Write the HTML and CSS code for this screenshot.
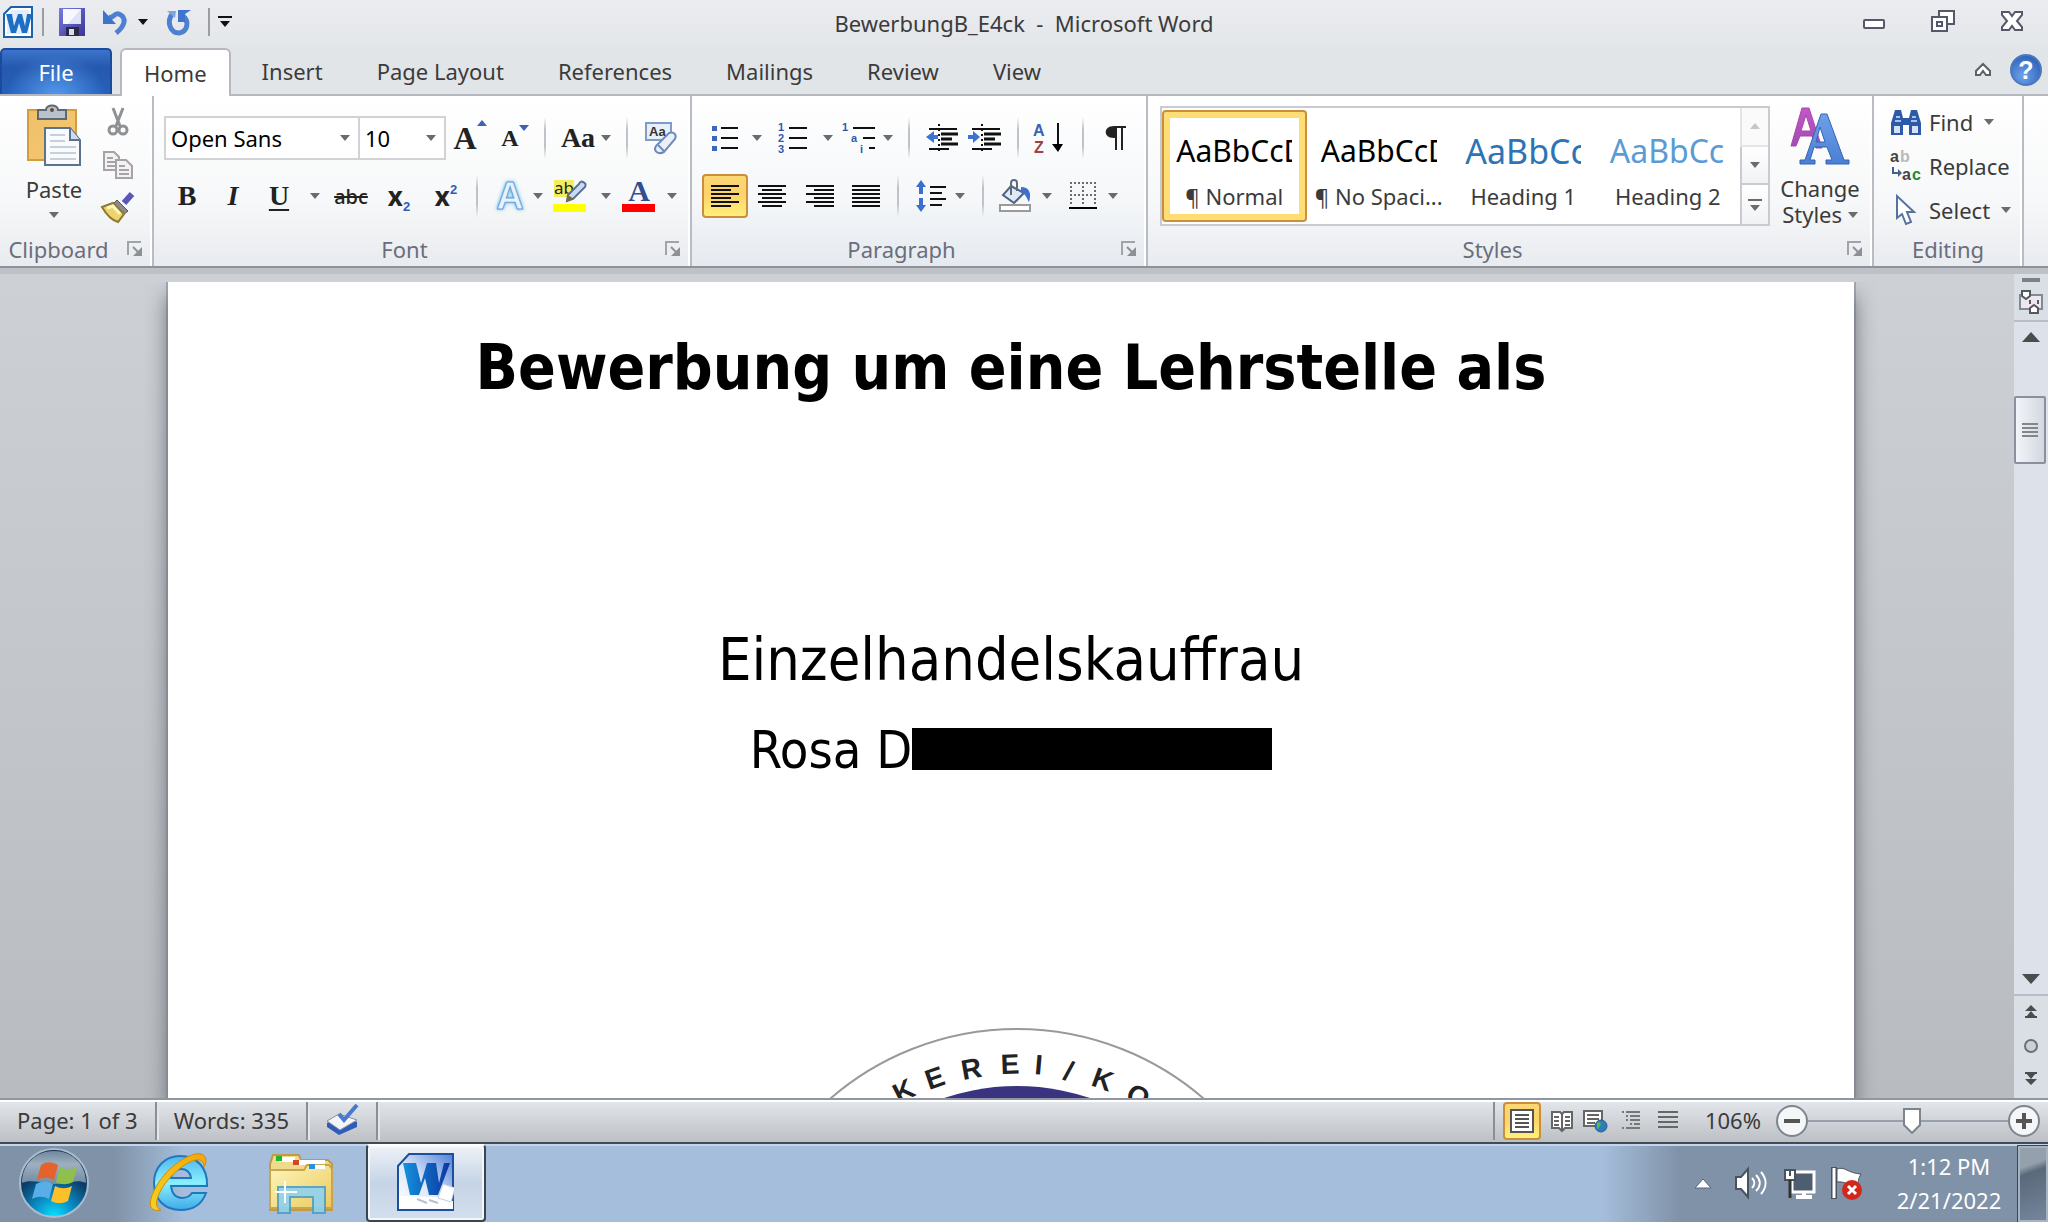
FILE: index.html
```html
<!DOCTYPE html>
<html lang="en">
<head>
<meta charset="utf-8">
<title>BewerbungB_E4ck - Microsoft Word</title>
<link rel="stylesheet" href="styles.css">
</head>
<body>
<svg class="defs" width="0" height="0" aria-hidden="true">
  <defs>
    <linearGradient id="gBoard" x1="0" y1="0" x2="1" y2="1"><stop offset="0" stop-color="#efc069"/><stop offset="1" stop-color="#f3c871"/></linearGradient>
    <linearGradient id="gBlue" x1="0" y1="0" x2="0" y2="1"><stop offset="0" stop-color="#6fa0e8"/><stop offset="1" stop-color="#4a7fd4"/></linearGradient>
    <linearGradient id="gSave" x1="0" y1="0" x2="1" y2="1"><stop offset="0" stop-color="#7a7be0"/><stop offset="1" stop-color="#3a3596"/></linearGradient>
    <linearGradient id="gPurple" x1="0" y1="0" x2="0" y2="1"><stop offset="0" stop-color="#c257c8"/><stop offset="1" stop-color="#a24bb0"/></linearGradient>
    <linearGradient id="gFolder" x1="0" y1="0" x2="1" y2="1"><stop offset="0" stop-color="#fdf6bd"/><stop offset="1" stop-color="#ecc95c"/></linearGradient>
    <linearGradient id="gIe" x1="0" y1="0" x2="0" y2="1"><stop offset="0" stop-color="#4db6ee"/><stop offset=".5" stop-color="#8af0fd"/><stop offset="1" stop-color="#3fa9e8"/></linearGradient>
    <linearGradient id="gRing" x1="0" y1="1" x2="1" y2="0"><stop offset="0" stop-color="#f6d21c"/><stop offset="1" stop-color="#f5a609"/></linearGradient>
    <linearGradient id="gW" x1="0" y1="0" x2="1" y2="0"><stop offset="0" stop-color="#1492dd"/><stop offset="1" stop-color="#0c36a0"/></linearGradient>
    <linearGradient id="gPaper" x1="0" y1="1" x2="1" y2="0"><stop offset="0" stop-color="#fff"/><stop offset=".45" stop-color="#dfe9fb"/><stop offset="1" stop-color="#4f82d8"/></linearGradient>
    <radialGradient id="gOrb" cx=".5" cy="1" r=".85"><stop offset="0" stop-color="#08e4ff"/><stop offset=".35" stop-color="#0a8fc8"/><stop offset=".75" stop-color="#0c3c66"/><stop offset="1" stop-color="#14334f"/></radialGradient>
    <linearGradient id="gShine" x1="0" y1="0" x2="0" y2="1"><stop offset="0" stop-color="#7f97ab"/><stop offset=".4" stop-color="#b7c6d2"/><stop offset="1" stop-color="#8097aa"/></linearGradient>
    <radialGradient id="gHelp" cx=".4" cy=".7" r=".7"><stop offset="0" stop-color="#6fa2ea"/><stop offset="1" stop-color="#2d62bb"/></radialGradient>
    <symbol id="down" viewBox="0 0 10 6"><path d="M0 0h10L5 6z"/></symbol>
    <symbol id="launch" viewBox="0 0 16 16"><path d="M1 14V1h13" fill="none" stroke="#a0a3a8" stroke-width="2"/><path d="M6 6l7 7" stroke="#8d9095" stroke-width="2"/><path d="M15 6v9H6z" fill="#8d9095"/></symbol>
  </defs>
</svg>

<header class="titlebar">
  <div class="quick">
    <button class="qa" aria-label="Word menu"><svg width="32" height="34"><path d="M9 2h21v30H2V9z" fill="#fff" stroke="#1d62a8" stroke-width="2"/><path d="M10 5h17v24H5V10z" fill="#e2ecfa"/><path d="M4 9h6l2 12 4-12h4l3 12 2-12h5l-5 19h-5l-3-10-3 10H9z" fill="#1c6fc4"/></svg></button>
    <i class="qsep"></i>
    <button class="qa" aria-label="Save"><svg width="28" height="30"><path d="M1 1h26v28H1z" fill="url(#gSave)"/><path d="M5 2h18v15H5z" fill="#f6f8fd"/><path d="M23 2v15H10z" fill="#c3cdec" opacity=".5"/><path d="M8 20h13v9H8z" fill="#2b2a44"/><path d="M11 22h5v6h-5z" fill="#dcdcec"/></svg></button>
    <button class="qa undo" aria-label="Undo"><svg width="26" height="28"><path d="M6 9c5 3 6-5 11-3 9 4 5 13-3 19" fill="none" stroke="#4d7fd2" stroke-width="5"/><path d="M1 2v14h13z" fill="#3f74cc"/></svg></button>
    <button class="qa" aria-label="Undo history"><svg class="dark" width="10" height="6"><use href="#down"/></svg></button>
    <button class="qa redo" aria-label="Repeat"><svg width="26" height="28"><path d="M6 6c-6 9-1 19 7 19 8-1 11-11 4-17" fill="none" stroke="#4d7fd2" stroke-width="5"/><path d="M12 2h13l-6 4v8h-7z" fill="#3f74cc"/><path d="M1 3h9l-1 7z" fill="#7ea4e2"/></svg></button>
    <i class="qsep"></i>
    <button class="qa" aria-label="Customize Quick Access Toolbar"><svg class="dark" width="14" height="12"><path d="M0 0h14v2H0zM2 5h10l-5 6z"/></svg></button>
  </div>
  <h1 class="caption">BewerbungB_E4ck &nbsp;-&nbsp; Microsoft Word</h1>
  <div class="winbtns">
    <button aria-label="Minimize"><svg width="24" height="24"><rect x="2" y="11" width="20" height="8" rx="1" fill="#fff" stroke="#54586a" stroke-width="2"/></svg></button>
    <button aria-label="Restore"><svg width="26" height="24" fill="#fff" stroke="#54586a" stroke-width="2"><path d="M9 2h15v13H9z"/><path d="M2 8h15v14H2z"/><path d="M7 13h5v4H7z"/></svg></button>
    <button aria-label="Close"><svg width="24" height="24"><path d="M2 3h7l3 4 3-4h7v3l-5 6 5 6v3h-7l-3-4-3 4H2v-3l5-6-5-6z" fill="#fff" stroke="#54586a" stroke-width="2"/></svg></button>
  </div>
</header>

<nav class="tabs">
  <button class="file">File</button>
  <button class="tab active">Home</button>
  <button class="tab">Insert</button>
  <button class="tab">Page Layout</button>
  <button class="tab">References</button>
  <button class="tab">Mailings</button>
  <button class="tab">Review</button>
  <button class="tab">View</button>
  <button class="mini" aria-label="Minimize the Ribbon"><svg width="18" height="16"><path d="M2 13v-4l7-7 7 7v4h-4l-3-4-3 4z" fill="#fff" stroke="#5d6069" stroke-width="2"/></svg></button>
  <button class="mini" aria-label="Help"><svg width="32" height="32"><circle cx="16" cy="16" r="15" fill="url(#gHelp)" stroke="#4c79bd" stroke-width="2"/><text x="16" y="25" class="qmark">?</text></svg></button>
</nav>

<section class="ribbon">
  <div class="group clip">
    <div class="body">
      <button class="paste"><svg width="56" height="64"><path d="M2 6h48v50H2z" fill="url(#gBoard)" stroke="#d49c3f" stroke-width="2"/><path d="M12 6h8c0-6 12-6 12 0h8v9H12z" fill="#b9c1ca" stroke="#5e6874" stroke-width="2"/><circle cx="26" cy="6" r="2" fill="#6b4b2b"/><path d="M19 24h25l10 12v25H19z" fill="#f8fafc" stroke="#5b738f" stroke-width="2"/><path d="M44 24v12h10" fill="#cfdcec" stroke="#5b738f" stroke-width="2"/><path d="M24 31h15M24 37h15M24 43h26M24 49h26M24 55h26" stroke="#c5d0dc" stroke-width="2"/></svg><span>Paste</span><svg class="arr" width="10" height="6"><use href="#down"/></svg></button>
      <div class="small">
        <button aria-label="Cut"><svg width="24" height="30"><path d="M7 1l7 18M17 1l-7 18" stroke="#8f9195" stroke-width="3"/><circle cx="7" cy="23" r="4" fill="none" stroke="#8f9195" stroke-width="3"/><circle cx="17" cy="23" r="4" fill="none" stroke="#8f9195" stroke-width="3"/></svg></button>
        <button aria-label="Copy"><svg width="32" height="28" fill="#f4f2f4" stroke="#a5a3a8" stroke-width="2"><path d="M2 1h10l5 5v13H2z"/><path d="M14 9h10l6 6v12H14z"/><path d="M5 7h6M5 11h8M5 15h8M17 15h6M17 19h10M17 23h10"/></svg></button>
        <button aria-label="Format Painter"><svg width="34" height="30"><path d="M31 1l-8 9" stroke="#5a55b8" stroke-width="6"/><path d="M16 7l11 11-5 4L12 11z" fill="#8b8b8b" stroke="#555" stroke-width="1"/><path d="M1 14l11-4 11 11-6 8C10 27 5 21 1 14z" fill="#ecd66c" stroke="#8f7734" stroke-width="2"/><path d="M6 15l6-2 7 8" stroke="#fdf6c0" stroke-width="3" fill="none"/></svg></button>
      </div>
    </div>
    <div class="foot"><span>Clipboard</span><button aria-label="Clipboard dialog"><svg width="16" height="16"><use href="#launch"/></svg></button></div>
  </div>

  <div class="group font">
    <div class="body rows">
      <div class="row f1">
        <select class="combo" aria-label="Font"><option>Open Sans</option></select>
        <select class="combo size" aria-label="Font size"><option>10</option></select>
        <button class="serif big" aria-label="Grow Font">A<svg class="tip" width="10" height="6"><path d="M0 6h10L5 0z"/></svg></button>
        <button class="serif mid" aria-label="Shrink Font">A<svg class="tip" width="10" height="6"><use href="#down"/></svg></button>
        <i class="sep"></i>
        <button class="serif case" aria-label="Change Case">Aa</button>
        <button aria-label="Change Case options"><svg class="arr" width="10" height="6"><use href="#down"/></svg></button>
        <i class="sep"></i>
        <button aria-label="Clear Formatting"><svg width="34" height="34"><path d="M2 2h25v17H2z" fill="#e7effb" stroke="#7f9cc8" stroke-width="2"/><text x="5" y="15" class="aasm">Aa</text><path d="M12 25L25 12c5-2 8 2 6 6L20 31c-6 3-11-1-8-6z" fill="#eaf0fa" stroke="#6e8bbb" stroke-width="2"/><path d="M14 24l6 6" stroke="#6e8bbb" stroke-width="2"/></svg></button>
      </div>
      <div class="row f2">
        <button class="serif">B</button>
        <button class="serif ital">I</button>
        <button class="serif under">U</button>
        <button aria-label="Underline options"><svg class="arr" width="10" height="6"><use href="#down"/></svg></button>
        <button class="strike">abc</button>
        <button class="script">x<sub>2</sub></button>
        <button class="script">x<sup>2</sup></button>
        <i class="sep"></i>
        <button class="glow" aria-label="Text Effects">A</button>
        <button aria-label="Text Effects options"><svg class="arr" width="10" height="6"><use href="#down"/></svg></button>
        <button aria-label="Text Highlight Color"><svg width="34" height="34"><path d="M1 1h20v17H1z" fill="#f2ee5e"/><text x="1" y="15" class="abhl">ab</text><path d="M30 3c3 1 3 3 2 5L20 20l-6 2 1-6L26 5c1-2 2-3 4-2z" fill="#c9daf3" stroke="#5b6f96" stroke-width="2"/><path d="M15 16l6 4-8 3z" fill="#7a6a3c"/><path d="M0 25h33v8H0z" fill="#ff0"/></svg></button>
        <button aria-label="Highlight options"><svg class="arr" width="10" height="6"><use href="#down"/></svg></button>
        <button aria-label="Font Color"><svg width="34" height="34"><text x="17" y="22" class="fcol">A</text><path d="M0 25h33v8H0z" fill="#f00"/></svg></button>
        <button aria-label="Font Color options"><svg class="arr" width="10" height="6"><use href="#down"/></svg></button>
      </div>
    </div>
    <div class="foot"><span>Font</span><button aria-label="Font dialog"><svg width="16" height="16"><use href="#launch"/></svg></button></div>
  </div>

  <div class="group para">
    <div class="body rows">
      <div class="row p1">
        <button aria-label="Bullets"><svg width="28" height="28"><path d="M10 4h17M10 14h17M10 24h17" stroke="#111" stroke-width="2"/><path d="M1 2h5v5H1zM1 12h5v5H1zM1 22h5v5H1z" fill="#3b66bd"/></svg></button>
        <button aria-label="Bullet options"><svg class="arr" width="10" height="6"><use href="#down"/></svg></button>
        <button aria-label="Numbering"><svg width="30" height="32"><path d="M11 6h18M11 16h18M11 26h18" stroke="#111" stroke-width="2"/><g class="nums"><text x="0" y="9">1</text><text x="0" y="20">2</text><text x="0" y="31">3</text></g></svg></button>
        <button aria-label="Numbering options"><svg class="arr" width="10" height="6"><use href="#down"/></svg></button>
        <button aria-label="Multilevel List"><svg width="34" height="32"><path d="M11 6h22M21 16h12M27 26h6" stroke="#111" stroke-width="2"/><g class="nums"><text x="0" y="9">1</text><text x="9" y="20">a</text><text x="18" y="31">i</text></g></svg></button>
        <button aria-label="Multilevel options"><svg class="arr" width="10" height="6"><use href="#down"/></svg></button>
        <i class="sep"></i>
        <button aria-label="Decrease Indent"><svg width="34" height="30"><path d="M4 6h28M4 26h20" stroke="#111" stroke-width="2"/><path d="M16 11h17M16 16h11M16 21h17" stroke="#111" stroke-width="3"/><path d="M14 1v28" stroke="#111" stroke-width="2" stroke-dasharray="2 3"/><path d="M1 14l8-6v4h4v4H9v4z" fill="#3b74d4"/></svg></button>
        <button aria-label="Increase Indent"><svg width="34" height="30"><path d="M4 6h28M4 26h20" stroke="#111" stroke-width="2"/><path d="M16 11h17M16 16h11M16 21h17" stroke="#111" stroke-width="3"/><path d="M14 1v28" stroke="#111" stroke-width="2" stroke-dasharray="2 3"/><path d="M12 14L5 8v4H0v4h5v4z" fill="#3b74d4"/></svg></button>
        <i class="sep"></i>
        <button aria-label="Sort"><svg width="32" height="34"><text x="0" y="15" class="sorta">A</text><text x="1" y="32" class="sortz">Z</text><path d="M25 2v24" stroke="#111" stroke-width="2"/><path d="M19 23h11l-5 8z"/></svg></button>
        <i class="sep"></i>
        <button aria-label="Show paragraph marks"><svg width="24" height="28"><path d="M22 2H10C-1 2-1 14 10 14h1v12h2V4h4v22h2V4h3z" fill="#222"/></svg></button>
      </div>
      <div class="row p2">
        <button class="on" aria-label="Align Left"><svg width="28" height="24" class="lines"><path d="M0 2h28M0 6h20M0 10h28M0 14h20M0 18h28M0 22h20"/></svg></button>
        <button aria-label="Center"><svg width="28" height="24" class="lines"><path d="M0 2h28M4 6h20M0 10h28M4 14h20M0 18h28M4 22h20"/></svg></button>
        <button aria-label="Align Right"><svg width="28" height="24" class="lines"><path d="M0 2h28M8 6h20M0 10h28M8 14h20M0 18h28M8 22h20"/></svg></button>
        <button aria-label="Justify"><svg width="28" height="24" class="lines"><path d="M0 2h28M0 6h28M0 10h28M0 14h28M0 18h28M0 22h28"/></svg></button>
        <i class="sep"></i>
        <button aria-label="Line Spacing"><svg width="32" height="34"><path d="M15 8h16M15 14h12M15 20h16M15 26h12" stroke="#111" stroke-width="2"/><path d="M6 1l5 7H8v7H4V8H1zM6 33l5-7H8v-7H4v7H1z" fill="#3b6fcb"/></svg></button>
        <button aria-label="Line Spacing options"><svg class="arr" width="10" height="6"><use href="#down"/></svg></button>
        <i class="sep"></i>
        <button aria-label="Shading"><svg width="34" height="34"><path d="M12 7l13 7-10 10L4 16z" fill="#dfe9f6" stroke="#4d6285" stroke-width="2"/><path d="M12 16V4c0-4 6-4 6 0v8" fill="none" stroke="#5f6b7c" stroke-width="2"/><path d="M22 8c8 0 11 6 8 15-2-3-3-8-8-10z" fill="#3d70c6"/><path d="M1 26h30v6H1z" fill="#fff" stroke="#9a9a9a" stroke-width="2"/></svg></button>
        <button aria-label="Shading options"><svg class="arr" width="10" height="6"><use href="#down"/></svg></button>
        <button aria-label="Borders"><svg width="28" height="30"><path d="M1 2h26M1 14h26M2 1v22M14 1v22M26 1v22" stroke="#6b6b6b" stroke-width="2" stroke-dasharray="2 2" fill="none"/><path d="M0 27h28" stroke="#000" stroke-width="2"/></svg></button>
        <button aria-label="Border options"><svg class="arr" width="10" height="6"><use href="#down"/></svg></button>
      </div>
    </div>
    <div class="foot"><span>Paragraph</span><button aria-label="Paragraph dialog"><svg width="16" height="16"><use href="#launch"/></svg></button></div>
  </div>

  <div class="group styles">
    <div class="body">
      <div class="gallery">
        <button class="style sel"><b class="s0">AaBbCcD</b><span>¶ Normal</span></button>
        <button class="style"><b class="s0">AaBbCcD</b><span>¶ No Spaci...</span></button>
        <button class="style"><b class="s1">AaBbCc</b><span>Heading 1</span></button>
        <button class="style"><b class="s2">AaBbCc</b><span>Heading 2</span></button>
        <div class="gscroll">
          <button class="off" aria-label="Previous styles"><svg width="10" height="6" fill="#c4c6ca"><path d="M0 6h10L5 0z"/></svg></button>
          <button aria-label="Next styles"><svg class="arr" width="10" height="6"><use href="#down"/></svg></button>
          <button aria-label="More styles"><svg class="arr" width="14" height="12"><path d="M0 0h14v2H0zM2 6h10l-5 6z"/></svg></button>
        </div>
      </div>
      <button class="change"><svg width="62" height="58"><path d="M13 1h7l13 40h-6l-4-12H11L7 39H2zM12 24h10L17 8z" fill="url(#gPurple)" stroke="#a845b0" fill-rule="evenodd"/><path d="M32 7h6l17 46h5v4H37v-4h6l-5-13H25l-4 13h5v4H11v-4h5zM27 35h9l-5-15z" fill="url(#gBlue)" stroke="#3564b5" fill-rule="evenodd"/></svg><span>Change<br>Styles <svg class="arr" width="10" height="6"><use href="#down"/></svg></span></button>
    </div>
    <div class="foot"><span>Styles</span><button aria-label="Styles dialog"><svg width="16" height="16"><use href="#launch"/></svg></button></div>
  </div>

  <div class="group edit">
    <div class="body">
      <button><svg width="32" height="28"><path d="M5 2h6l2 8h6l2-8h6l4 13v12H19V17h-6v10H1V15z" fill="#2d5aa8"/><path d="M4 18h6v7H4zM22 18h6v7h-6z" fill="#d5e2f5"/><path d="M6 9h4M22 9h4M5 13h6M21 13h6" stroke="#a9c4ea" stroke-width="2"/></svg>Find<svg class="arr" width="10" height="6"><use href="#down"/></svg></button>
      <button><svg width="32" height="34"><g class="rep"><text x="0" y="13">a</text><text x="10" y="13" fill="#b9b9b9">b</text><text x="12" y="31">a</text><text x="22" y="31" fill="#1d8a1d">c</text></g><path d="M3 18v6h6" fill="none" stroke="#41608f" stroke-width="2"/><path d="M8 20l4 4-4 4z" fill="#41608f"/></svg>Replace</button>
      <button><svg width="32" height="30"><path d="M7 1v22l5-4 4 10 5-2-4-10h7z" fill="#fff" stroke="#56729e" stroke-width="2"/></svg>Select<svg class="arr" width="10" height="6"><use href="#down"/></svg></button>
    </div>
    <div class="foot"><span>Editing</span></div>
  </div>
</section>

<main class="work">
  <div class="canvas">
    <article class="page">
      <h2>Bewerbung um eine Lehrstelle als</h2>
      <p class="job">Einzelhandelskauffrau</p>
      <p class="name">Rosa D<span class="redact"></span></p>
      <svg class="seal" width="400" height="74" viewBox="811 1024 400 74" role="img" aria-label="Logo">
        <circle cx="1017" cy="1314" r="285" fill="none" stroke="#999" stroke-width="2"/>
        <circle cx="1017" cy="1314" r="228" fill="#3a3480"/>
        <text x="899 929 963 1001 1034 1062 1090 1124" y="1104 1090 1080 1074 1074 1079 1085 1099" rotate="-27 -19 -10 -2 5 18 20 29">KEREI/KO</text>
      </svg>
    </article>
  </div>
  <aside class="scroll">
    <div class="top">
      <i class="split"></i>
      <button aria-label="View Ruler"><svg width="26" height="26"><path d="M2 5h22v14H2z" fill="#efe6ef" stroke="#7e8a94" stroke-width="2"/><path d="M4 1h8v5L8 9 4 6z" fill="#fff" stroke="#55585c" stroke-width="2"/><path d="M12 23v-5l4-3 4 3v5z" fill="#fff" stroke="#55585c" stroke-width="2"/><path d="M12 10v4M20 10v4" stroke="#55585c" stroke-width="2"/></svg></button>
    </div>
    <button class="step" aria-label="Scroll up"><svg width="18" height="10"><path d="M0 10h18L9 0z"/></svg></button>
    <div class="track"><div class="thumb"></div></div>
    <button class="step" aria-label="Scroll down"><svg width="18" height="10"><path d="M0 0h18L9 10z"/></svg></button>
    <div class="browse">
      <button aria-label="Previous Page"><svg width="12" height="14"><path d="M6 0l6 6H0zM6 6l5 6H1zM0 11h12v2H0z"/></svg></button>
      <button aria-label="Select Browse Object"><svg width="16" height="16"><circle cx="8" cy="8" r="6" fill="#ccd0d4" stroke="#6c7075" stroke-width="2"/></svg></button>
      <button aria-label="Next Page"><svg width="12" height="14"><path d="M0 0h12v2H0zM1 1h10L6 7zM0 7h12l-6 6z"/></svg></button>
    </div>
  </aside>
</main>

<footer class="status">
  <button class="cell">Page: 1 of 3</button>
  <button class="cell">Words: 335</button>
  <button class="cell" aria-label="Proofing"><svg width="34" height="32"><path d="M2 19l13-8 17 7v5l-18 8L2 23z" fill="#2f5cb8"/><path d="M2 17l12-7 18 6-17 10z" fill="#f3f5f8" stroke="#8c9099"/><path d="M14 10l5 6L32 1" fill="none" stroke="#4a78cf" stroke-width="4"/></svg></button>
  <div class="views">
    <button class="on" aria-label="Print Layout"><svg width="24" height="24"><path d="M1 1h22v22H1z" fill="#fff" stroke="#555" stroke-width="2"/><path d="M5 6h14M5 10h14M5 14h14M5 18h14" stroke="#555" stroke-width="2"/></svg></button>
    <button aria-label="Full Screen Reading"><svg width="24" height="24"><path d="M2 3h8l2 2 2-2h8v16h-7l-3 3-3-3H2z" fill="#fff" stroke="#666" stroke-width="2"/><path d="M12 4v17M4 8h5M4 12h5M4 16h5M15 8h5M15 12h5M15 16h5" stroke="#666" stroke-width="2"/></svg></button>
    <button aria-label="Web Layout"><svg width="26" height="24"><path d="M1 2h18v15H1z" fill="#fff" stroke="#666" stroke-width="2"/><path d="M4 6h12M4 10h12M4 14h8" stroke="#666" stroke-width="2"/><circle cx="18" cy="17" r="6" fill="#2c7db8" stroke="#2b5c90"/><path d="M14 14c3-2 5 1 3 3s-1 4-3 2z" fill="#5cb84c"/></svg></button>
    <button aria-label="Outline"><svg width="24" height="22"><path d="M2 2h2M6 2h14M6 6h2M10 6h10M6 10h2M10 10h10M10 14h2M14 14h6M2 18h2M6 18h14" stroke="#777" stroke-width="2"/></svg></button>
    <button aria-label="Draft"><svg width="22" height="22"><path d="M1 2h20M1 7h20M1 12h20M1 17h20" stroke="#666" stroke-width="2"/></svg></button>
  </div>
  <button class="pct">106%</button>
  <div class="zoom">
    <button aria-label="Zoom Out"><svg width="32" height="32"><circle cx="16" cy="16" r="15" fill="#f5f6f8" stroke="#7e858e" stroke-width="2"/><path d="M8 16h16" stroke="#555" stroke-width="4"/></svg></button>
    <input type="range" min="0" max="100" value="52" aria-label="Zoom">
    <button aria-label="Zoom In"><svg width="32" height="32"><circle cx="16" cy="16" r="15" fill="#f5f6f8" stroke="#7e858e" stroke-width="2"/><path d="M8 16h16M16 8v16" stroke="#555" stroke-width="4"/></svg></button>
  </div>
</footer>

<div class="taskbar">
  <button class="start" aria-label="Start"><svg width="72" height="70"><circle cx="36" cy="35" r="34" fill="url(#gOrb)" stroke="#a9bccd" stroke-width="2"/><path d="M4 35C4 16 18 3 36 3s32 13 32 32c-10-5-20 2-32 1S12 31 4 35z" fill="url(#gShine)" opacity=".85"/><path d="M23 17c6-4 11-3 17 0l-4 15c-6-3-11-3-17 0z" fill="#e5622c"/><path d="M42 19c6 3 11 3 17 0l-4 15c-6 3-11 3-17 0z" fill="#8fc04c"/><path d="M18 36c6-3 11-3 17 0l-4 15c-6-3-11-3-17 0z" fill="#5aaee8"/><path d="M37 38c6 3 11 3 17 0l-4 15c-6 3-11 3-17 0z" fill="#fbc02a"/></svg></button>
  <button class="app" aria-label="Internet Explorer"><svg width="64" height="64"><path d="M33 5c17 0 28 12 27 30H24c1 8 5 12 11 12 5 0 8-2 10-5h14c-4 11-12 17-25 17C17 59 7 48 7 32S18 5 33 5zM24 27h20c-1-6-4-9-10-9s-9 3-10 9z" fill="url(#gIe)" stroke="#1f77be" stroke-width="2" fill-rule="evenodd"/><path d="M14 59C-1 62 1 48 12 31 24 13 44 1 54 3c6 2 6 8 3 13 0-5-3-8-8-7C38 11 22 25 14 39 8 50 8 57 14 59z" fill="url(#gRing)" stroke="#c98d0c"/></svg></button>
  <button class="app" aria-label="Windows Explorer"><svg width="68" height="64"><path d="M3 13l3-9h26l2 5h27l4 4v46H3z" fill="#efd98b" stroke="#c09a45" stroke-width="2"/><path d="M12 6h16v5H12z" fill="#fff"/><path d="M9 5h6v5H9z" fill="#1fb52c"/><path d="M26 9h32v5H26z" fill="#fff"/><path d="M26 9h6v5h-6z" fill="#d14628"/><path d="M3 19h34l3-5h22l3 4v39H3z" fill="url(#gFolder)" stroke="#c9a54e" stroke-width="2"/><path d="M42 14h16v4H42z" fill="#fff"/><path d="M42 13h6v5h-6z" fill="#2493dc"/><path d="M11 62V36h47v26H46V46H23v16z" fill="#8fd2ef" stroke="#4d9fc9" stroke-width="2" opacity=".9"/><path d="M18 30v22M8 41h22" stroke="#fff" stroke-width="2"/></svg></button>
  <button class="app running" aria-label="Word"><svg width="62" height="62"><path d="M14 2h44v56H3V14z" fill="url(#gPaper)" stroke="#1c4f9c" stroke-width="2"/><path d="M4 57V44l40 1 14 4v8z" fill="#fff"/><path d="M8 11h13l5 20 6-20h9l3 20 5-20h6L43 43h-9l-4-17-6 17h-9z" fill="url(#gW)"/><path d="M48 32l12 4-4 14-13-4z" fill="#fff" stroke="#c3cfe4"/><path d="M22 47l10 4M34 48l9 3" stroke="#b5c0d4" stroke-width="2"/></svg></button>
  <div class="tray">
    <button aria-label="Show hidden icons"><svg width="18" height="12"><path d="M1 11h16l-8-9z" fill="#fff" stroke="#55677f"/></svg></button>
    <button aria-label="Volume"><svg width="34" height="34"><path d="M2 11h5l7-8v28l-7-8H2z" fill="#fff" stroke="#47535f" stroke-width="2"/><path d="M18 12c3 3 3 7 0 10M22 9c5 5 5 11 0 16M27 6c6 7 6 15 0 22" fill="none" stroke="#fff" stroke-width="2"/></svg></button>
    <button aria-label="Network"><svg width="34" height="34"><path d="M10 6h22v20H10z" fill="#4e5d70" stroke="#fff" stroke-width="3"/><path d="M14 31h16M22 26v5" stroke="#fff" stroke-width="4"/><path d="M3 4h10v10H3z" fill="#fff" stroke="#47535f" stroke-width="2"/><path d="M8 14v18" stroke="#333" stroke-width="3"/><path d="M8 5v5" stroke="#47535f" stroke-width="2"/></svg></button>
    <button aria-label="Action Center"><svg width="34" height="36"><path d="M4 2v32" stroke="#47535f" stroke-width="6"/><path d="M4 3v30" stroke="#fff" stroke-width="3"/><path d="M7 4c8-3 10 4 24 5-3 5-3 8-2 11-10 1-14-4-22-3z" fill="#fff" stroke="#47535f"/><circle cx="22" cy="25" r="10" fill="#d3271b"/><path d="M18 21l8 8M26 21l-8 8" stroke="#fff" stroke-width="3"/></svg></button>
    <div class="clock"><span>1:12 PM</span><span>2/21/2022</span></div>
  </div>
  <button class="peek" aria-label="Show desktop"></button>
</div>
</body>
</html>
```
FILE: styles.css
```css
* { box-sizing: border-box; }
body {
  margin: 0;
  height: 100vh;
  display: flex;
  flex-direction: column;
  overflow: hidden;
  font: 22px/26px "Noto Sans", sans-serif;
  color: #3b3b3b;
  background: #c4c8cd;
}
button {
  font: inherit;
  color: inherit;
  margin: 0;
  padding: 0;
  border: 0;
  background: none;
  display: flex;
  align-items: center;
  justify-content: center;
}
h1, h2, p { margin: 0; font-weight: 400; }
svg { display: block; flex: none; overflow: visible; }
.defs { position: absolute; }
.arr { fill: #6b6b6b; }
.dark { fill: #111; }

/* Title bar */
.titlebar {
  height: 48px;
  flex: none;
  display: grid;
  grid-template-columns: 1fr auto 1fr;
  align-items: start;
  background: linear-gradient(#ebecf0, #e3e6e9);
}
.quick { display: flex; align-items: center; height: 44px; padding-left: 2px; }
.qsep { width: 2px; height: 28px; margin: 0 14px 0 8px; background: #9b9da1; }
.quick .undo { margin: 0 10px 0 16px; }
.quick .redo { margin: 0 8px 0 18px; }
.redo + .qsep { margin: 0 8px; }
.caption { font-size: 22px; line-height: 46px; }
.winbtns { display: flex; justify-content: flex-end; gap: 44px; padding: 9px 24px 0 0; }

/* Tabs */
.tabs {
  height: 48px;
  flex: none;
  display: flex;
  padding-right: 6px;
  background: #e1e5e8;
  border-bottom: 2px solid #b5b9bf;
}
.file {
  width: 112px;
  margin-right: 8px;
  border: 2px solid #1c4a9c;
  border-bottom: 0;
  border-radius: 5px 5px 0 0;
  color: #fff;
  background: radial-gradient(ellipse at 50% 110%, #559bee, transparent 65%), linear-gradient(#3c74cc, #2559ae 40%, #2760bb);
}
.tab { padding: 0 27px; }
.tab.active {
  height: 48px;
  margin-right: 4px;
  padding: 0 22px;
  border: 2px solid #b5b9bf;
  border-bottom: 0;
  border-radius: 6px 6px 0 0;
  background: #fff;
}
.mini { margin-left: 18px; padding-bottom: 2px; }
.tab + .mini { margin-left: auto; }
.qmark { font: bold 25px "Liberation Sans", sans-serif; fill: #fff; text-anchor: middle; }

/* Ribbon */
.ribbon {
  height: 178px;
  flex: none;
  display: flex;
  background: linear-gradient(#fff, #f7f8f9 60%, #e8ebef);
  border-bottom: 6px solid #bec1c6;
  box-shadow: inset 0 -2px #8f9298;
}
.group {
  height: 170px;
  display: flex;
  flex-direction: column;
  justify-content: space-between;
  border-right: 2px solid #b9bcc3;
  box-shadow: inset -2px 0 #fff;
}
.clip { width: 154px; }
.font { width: 538px; }
.para { width: 456px; background: linear-gradient(#fff, #f5f7f9 60%, #e5eaf0); }
.styles { flex: 1 1 726px; }
.edit { width: 150px; margin-right: 24px; }
.foot { height: 34px; display: flex; align-items: center; color: #6a6e7c; }
.foot span { flex: 1; text-align: center; padding-right: 10px; }
.foot span:only-child { padding-right: 0; }
.foot button { width: 16px; margin-right: 9px; }

.clip .body { display: flex; padding: 8px 0 0 18px; }
.paste { flex-direction: column; width: 72px; justify-content: flex-start; }
.paste span { margin: 8px 0 10px; }
.small { display: flex; flex-direction: column; gap: 14px; align-items: center; width: 56px; padding-top: 3px; }

.rows { padding: 20px 0 0 10px; display: flex; flex-direction: column; gap: 14px; }
.row { display: grid; height: 44px; align-items: center; justify-items: center; }
.f1 { grid-template-columns: 196px 86px 48px 42px 18px 48px 8px 34px 34px; }
.f2 { grid-template-columns: 46px 46px 46px 26px 46px 50px 44px 18px 48px 8px 56px 16px 50px 16px; }
.p1 { grid-template-columns: 46px 18px 54px 16px 46px 12px 30px 36px 50px 16px 46px 22px 44px; }
.p2 { grid-template-columns: 46px 48px 48px 44px 20px 46px 12px 34px 32px 30px 42px 18px; }
.sep { width: 2px; height: 42px; background: linear-gradient(transparent, #bfc2c9 30%, #bfc2c9 70%, transparent); }
.combo {
  appearance: none;
  width: 100%;
  height: 44px;
  padding: 0 0 0 5px;
  border: 2px solid #d0d2d6;
  border-radius: 0;
  font: 22px "Noto Sans", sans-serif;
  color: #000;
  background: #fff url("data:image/svg+xml,%3Csvg xmlns='http://www.w3.org/2000/svg' width='10' height='6'%3E%3Cpath d='M0 0h10L5 6z' fill='%236b6b6b'/%3E%3C/svg%3E") no-repeat right 8px center;
}
.size { border-left: 0; }
.serif { font: bold 28px "Liberation Serif", serif; color: #222; }
.serif.big { font-size: 32px; }
.serif.mid { font-size: 24px; }
.tip { fill: #3d62b0; align-self: flex-start; }
.ital { font-style: italic; }
.under { text-decoration: underline; text-decoration-thickness: 2px; text-underline-offset: 4px; }
.strike { font: 500 20px "Noto Sans", sans-serif; text-decoration: line-through; text-decoration-thickness: 2px; color: #222; }
.script { font: bold 26px "Noto Sans", sans-serif; color: #222; align-items: baseline; }
.script sub, .script sup { font: bold 13px "Liberation Sans", sans-serif; color: #2f5cb5; }
.script sub { align-self: flex-end; }
.script sup { align-self: flex-start; padding-top: 4px; }
.glow {
  font: bold 38px "Liberation Sans", sans-serif;
  color: #e8f2fc;
  -webkit-text-stroke: 1px #6a9fd6;
  text-shadow: 0 0 3px #4eb4e6, 0 0 5px #7fcdf0;
}
.aasm { font: bold 13px "Liberation Sans", sans-serif; fill: #333; }
.abhl { font: 17px "Noto Sans", sans-serif; fill: #222; }
.fcol { font: bold 30px "Liberation Serif", serif; fill: #2f4f8f; text-anchor: middle; }
.nums { font: bold 11px/11px "Liberation Sans", sans-serif; fill: #3158ad; }
.sorta { font: bold 16px "Liberation Sans", sans-serif; fill: #3b61b4; }
.sortz { font: bold 16px "Liberation Sans", sans-serif; fill: #a04040; }
.rep { font: bold 16px "Liberation Sans", sans-serif; fill: #444; }
.lines { fill: none; stroke: #111; stroke-width: 2px; }
.on {
  border: 2px solid #c98f3c;
  border-radius: 4px;
  background: linear-gradient(#fbd774, #fdd26a 45%, #fff07a);
}
.row .on { width: 46px; height: 44px; }

/* Styles gallery */
.styles .body { display: flex; padding: 10px 2px 0 12px; }
.gallery {
  flex: 1;
  height: 120px;
  display: grid;
  grid-template-columns: repeat(4, 1fr) 30px;
  border: 2px solid #c9cbd0;
  border-right: 0;
  background: #fff;
}
.style { flex-direction: column; margin: 2px 0; padding: 12px 12px 0; border: 2px solid transparent; min-width: 0; }
.style b { width: 116px; height: 48px; overflow: hidden; font-weight: 400; line-height: 48px; text-align: left; color: #000; }
.style span { width: 136px; line-height: 42px; }
.style b.s0 { font-size: 30px; }
.style b.s1 { font-size: 34px; color: #2e74b5; }
.style b.s2 { font-size: 32px; color: #5b9bd5; }
.style.sel { border: 2px solid #c98f3c; border-radius: 4px; box-shadow: inset 0 0 0 6px #fedd74; }
.gscroll { display: grid; grid-template-rows: repeat(3, 1fr); border-right: 2px solid #c9cbd0; }
.gscroll button { border: 0 solid #c9cbd0; border-width: 0 0 2px 2px; background: linear-gradient(#fff, #f1f2f4); }
.gscroll button:last-child { border-bottom-width: 0; }
.gscroll .off { border-color: #e3e5e9; background: #fafafa; }
.change { width: 100px; flex-direction: column; justify-content: flex-start; padding-top: 1px; }
.change span { margin-top: 10px; }
.change .arr { display: inline-block; margin-bottom: 5px; }

.edit .body { display: flex; flex-direction: column; align-items: flex-start; gap: 12px; padding: 10px 0 0 16px; }
.edit button { height: 32px; gap: 7px; }
.edit .arr { margin-left: 4px; }

/* Document */
.work { flex: 1; min-height: 0; display: flex; }
.canvas {
  flex: 1;
  display: flex;
  padding: 8px 160px 0 168px;
  background: linear-gradient(#cdd0d5, #b8bbc0);
  overflow: hidden;
}
.page {
  flex: 1;
  display: flex;
  flex-direction: column;
  align-items: center;
  padding-top: 50px;
  color: #000;
  background: #fff;
  font-family: "DejaVu Sans Condensed", "DejaVu Sans", sans-serif;
  box-shadow: 0 14px 20px #666b70, 0 0 0 2px #a2a9b3;
  clip-path: inset(0 -24px);
}
.page h2 { font-size: 62px; line-height: 72px; font-weight: 700; }
.job { margin-top: 220px; font-size: 59px; line-height: 72px; }
.name { margin-top: 24px; font-size: 52px; line-height: 60px; white-space: nowrap; }
.redact { display: inline-block; width: 360px; height: 42px; background: #000; vertical-align: -2px; }
.seal { margin-top: auto; overflow: hidden; }
.seal text { font: bold 28px "Liberation Sans", sans-serif; fill: #222; }

/* Scroll bar */
.scroll { width: 34px; display: flex; flex-direction: column; background: #dce1ea; }
.top { height: 48px; border-bottom: 2px solid #b9bdca; display: flex; flex-direction: column; align-items: center; padding-top: 4px; gap: 8px; background: #dadfe6; }
.split { width: 18px; height: 4px; flex: none; background: #7e8184; }
.step { height: 30px; flex: none; fill: #4a4c4e; }
.track { flex: 1; padding-top: 44px; }
.thumb {
  width: 32px;
  height: 68px;
  border: 2px solid #8a909c;
  border-radius: 2px;
  background: repeating-linear-gradient(#848689 0 2px, transparent 2px 4px) center / 16px 14px no-repeat, linear-gradient(90deg, #f2f5fa, #d2d7e0);
}
.browse { height: 104px; flex: none; display: flex; flex-direction: column; align-items: center; justify-content: space-between; padding: 9px 0 12px; border-top: 2px solid #b9bdca; background: #dadfe6; fill: #4a4c4e; }

/* Status bar */
.status {
  height: 46px;
  flex: none;
  display: flex;
  align-items: stretch;
  padding: 2px 8px 2px 0;
  border-top: 2px solid #9096a2;
  border-bottom: 2px solid #434c56;
  background: linear-gradient(#fff 2px, #e2e5ea 2px, #bcc0c5);
}
.cell { padding: 0 17px 2px; border-right: 2px solid #8a8f97; box-shadow: 2px 0 #e3e5e9; }
.views { margin-left: auto; display: flex; align-items: center; padding-left: 8px; gap: 8px; border-left: 2px solid #8a8f97; }
.views .on { width: 38px; height: 38px; }
.views button { min-width: 26px; }
.pct { margin: 0 15px 0 24px; padding-bottom: 2px; }
.views button:nth-child(n+4) { margin-left: 2px; }
.zoom { display: flex; align-items: center; }
.zoom input { appearance: none; width: 200px; height: 32px; margin: 0; background: linear-gradient(#97a0ab, #97a0ab) center / 100% 2px no-repeat; }
.zoom input::-webkit-slider-thumb {
  appearance: none;
  width: 18px;
  height: 26px;
  background: url("data:image/svg+xml,%3Csvg xmlns='http://www.w3.org/2000/svg' width='18' height='26'%3E%3Cpath d='M1 1h16v16l-8 8-8-8z' fill='%23fff' stroke='%237b8590' stroke-width='2'/%3E%3C/svg%3E") no-repeat;
}

/* Taskbar */
.taskbar {
  height: 78px;
  flex: none;
  display: flex;
  align-items: center;
  background: linear-gradient(90deg, #8092a8 114px, #a5bedb 184px, #a5bedb calc(100% - 446px), #8092a8 calc(100% - 368px));
  box-shadow: inset 0 2px #c3d5ea;
}
.start { width: 72px; margin-left: 18px; }
.app { width: 122px; height: 78px; }
.start + .app { margin-left: 28px; }
.running { margin-left: 4px; width: 120px; border: 2px solid #3b4550; border-top-color: #fff; border-radius: 4px; box-shadow: inset 0 0 0 2px #f3f7fb; background: linear-gradient(#eef2f7, #c5d4e6 50%, #d3dfed); }
.tray { margin-left: auto; display: flex; align-items: center; gap: 14px; color: #fff; }
.tray > button:first-child { margin-right: 8px; }
.clock { display: flex; flex-direction: column; align-items: center; width: 138px; line-height: 34px; margin-left: 2px; }
.peek { width: 30px; height: 76px; align-self: flex-end; border: 2px solid #a7b3c0; outline: 1px solid #3c4650; background: linear-gradient(160deg, #94a0ac 25%, #5a697a 35%, #74869c); }
```
